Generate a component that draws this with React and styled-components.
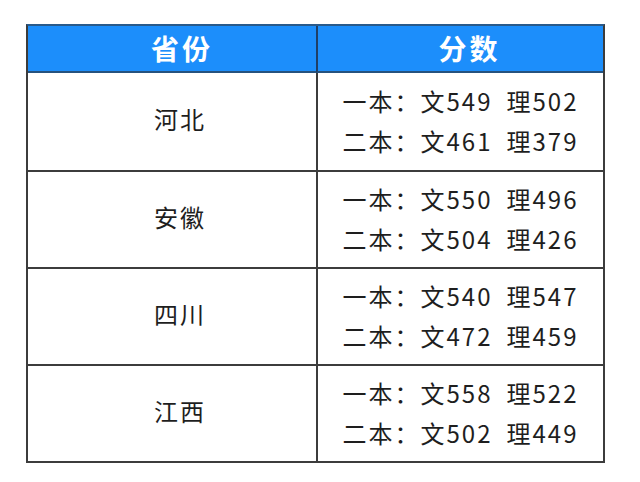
import React from 'react'
import styled, { createGlobalStyle } from 'styled-components'

const GlobalStyle = createGlobalStyle`
  body {
    margin: 0;
    background: #fff;
    font-family: "Noto Sans CJK SC", "Noto Sans", sans-serif;
  }
`

const Page = styled.div`
  width: 640px;
  height: 482px;
  padding: 24px 0 0 26px;
  box-sizing: border-box;
`

const Table = styled.div`
  width: 579px;
  display: grid;
  grid-template-columns: 288px 1fr;
  grid-template-rows: 47px repeat(4, 97px);
  border: 2px solid #3c3c3c;
  border-top-color: #2a5a8a;
  box-sizing: border-box;
`

const HeadCell = styled.div`
  background: #1c8efb;
  color: #fff;
  font-weight: 700;
  font-size: 28px;
  letter-spacing: 3px;
  display: flex;
  align-items: center;
  justify-content: center;
  padding-left: ${p => (p.$divider ? '18px' : '20px')};
  padding-bottom: 2px;
  border-bottom: 2px solid #26527e;
  border-left: ${p => (p.$divider ? '2px solid #1f3f66' : 'none')};
`

const Cell = styled.div`
  display: flex;
  flex-direction: column;
  align-items: center;
  justify-content: center;
  gap: 7px;
  color: #1e1e1e;
  font-size: 24px;
  letter-spacing: 2px;
  padding-left: ${p => (p.$divider ? '0' : '16px')};
  padding-bottom: ${p => (p.$divider ? '3px' : '6px')};
  border-top: ${p => (p.$first ? 'none' : '2px solid #3c3c3c')};
  border-left: ${p => (p.$divider ? '2px solid #3c3c3c' : 'none')};
`

const Line = styled.div`
  display: flex;
  gap: 14px;
  line-height: 33px;
`

const data = [
  { name: '河北', a: ['549', '502'], b: ['461', '379'] },
  { name: '安徽', a: ['550', '496'], b: ['504', '426'] },
  { name: '四川', a: ['540', '547'], b: ['472', '459'] },
  { name: '江西', a: ['558', '522'], b: ['502', '449'] },
]

export default function App() {
  return (
    <Page>
      <GlobalStyle />
      <Table>
        <HeadCell>省份</HeadCell>
        <HeadCell $divider>分数</HeadCell>
        {data.map((row, i) => (
          <React.Fragment key={row.name}>
            <Cell $first={i === 0}>{row.name}</Cell>
            <Cell $first={i === 0} $divider>
              <Line>
                <span>一本：文{row.a[0]}</span>
                <span>理{row.a[1]}</span>
              </Line>
              <Line>
                <span>二本：文{row.b[0]}</span>
                <span>理{row.b[1]}</span>
              </Line>
            </Cell>
          </React.Fragment>
        ))}
      </Table>
    </Page>
  )
}
